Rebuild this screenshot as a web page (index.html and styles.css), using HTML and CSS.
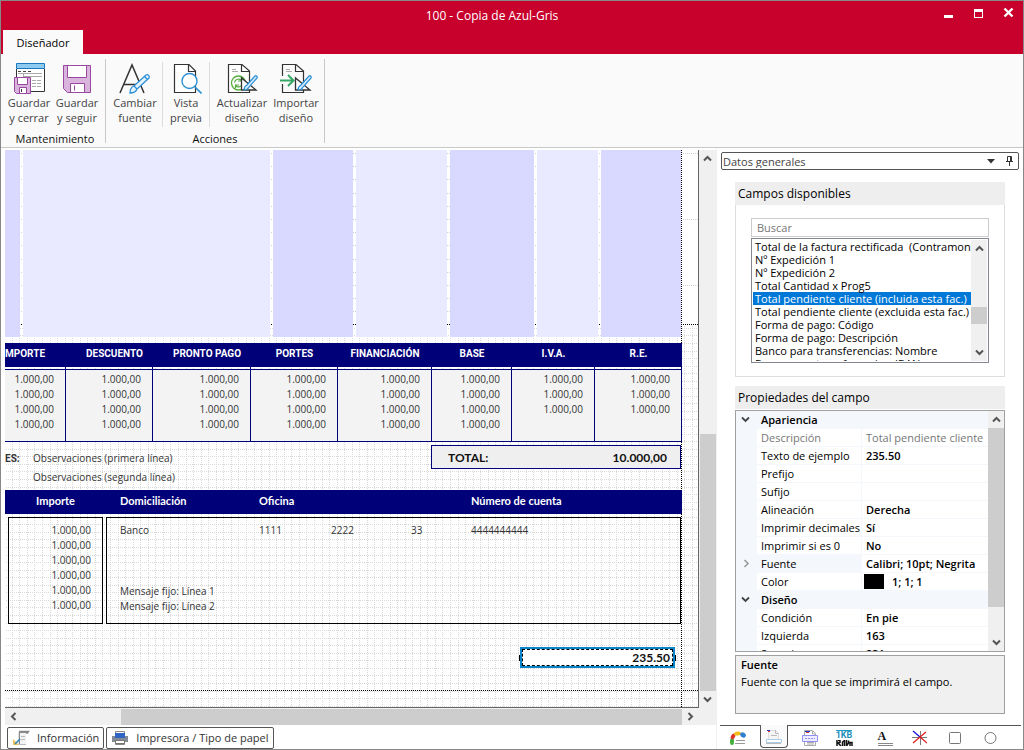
FILE: index.html
```html
<!DOCTYPE html>
<html lang="es">
<head>
<meta charset="utf-8">
<title>100 - Copia de Azul-Gris</title>
<link rel="stylesheet" href="styles.css">
</head>
<body>
<div class="window">
  <header class="titlebar">
    <h1 class="title">100 - Copia de Azul-Gris</h1>
    <div class="window-buttons">
      <button type="button" aria-label="Minimizar"><svg width="12" height="12" viewBox="0 0 12 12"><path d="M1 9h9v3H1z" fill="#fff"/></svg></button>
      <button type="button" aria-label="Maximizar"><svg width="12" height="12" viewBox="0 0 12 12" shape-rendering="crispEdges"><path fill-rule="evenodd" d="M1 3h9v9H1zM2 6v5h7V6z" fill="#fff"/></svg></button>
      <button type="button" aria-label="Cerrar"><svg width="12" height="12" viewBox="0 0 12 12"><path d="M1.500 2.500L9.500 10.500M9.500 2.500L1.500 10.500" stroke="#fff" stroke-width="2.400"/></svg></button>
    </div>
    <button type="button" class="ribbon-tab">Diseñador</button>
  </header>

  <nav class="ribbon" aria-label="Diseñador">
    <section class="group">
      <div class="tools">
        <button type="button" class="tool">
          <svg width="32" height="32" viewBox="0 0 32 32" fill="none"><path d="M3.500 7v22.500h28V7" fill="#fff" stroke="#333"/><path d="M3.500 1.500h28v5h-28z" fill="#8fcaf0" stroke="#1979c0"/><path d="M5 9.500h3m2 0h3m2 0h3" stroke="#444"/><path d="M5 11.500h24M10.500 11v4M10 14.500h19" stroke="#aaa"/><path d="M19 18.500h10M19 21.500h10M19 24.500h10" stroke="#aaa" stroke-dasharray="4 1"/><path d="M1.500 15.500h16v16h-14l-2-2z" fill="#d9b4dc" stroke="#9a479f"/><path d="M4.500 15.500h10v7h-10zM6.500 25.500h7v6h-7z" fill="#fff" stroke="#9a479f"/><path d="M8.500 27v3" stroke="#333"/></svg>
          <span>Guardar<br>y cerrar</span>
        </button>
        <button type="button" class="tool">
          <svg width="32" height="32" viewBox="0 0 32 32"><path d="M2.500 3.500h27v27H6.500l-4-4z" fill="#d9b4dc" stroke="#9a479f"/><path d="M6.500 3.500h19v12h-19zM9.500 21.500h14v9h-14z" fill="#fff" stroke="#9a479f"/><path d="M13.500 23.500v5" stroke="#9a479f"/></svg>
          <span>Guardar<br>y seguir</span>
        </button>
      </div>
      <h2>Mantenimiento</h2>
    </section>
    <section class="group">
      <div class="tools">
        <button type="button" class="tool">
          <svg width="32" height="32" viewBox="0 0 32 32" fill="none"><path d="M1 31L13 3l12 28M5 22.500h15" stroke="#333" stroke-width="1.500"/><path d="M11 31c0-4 1-6 4-7l12-11c2-1 4 1 3 3L18 27c-1 3-3 4-7 4zM15 24l3 3M25 14l3 3" fill="#e4f2fc" stroke="#2b8fd6" stroke-width="1.300"/></svg>
          <span>Cambiar<br>fuente</span>
        </button>
        <button type="button" class="tool tool-divided">
          <svg width="32" height="32" viewBox="0 0 32 32" fill="none"><path d="M19 2.500H4.500v28h21V9zM18.500 3v6.500H25" fill="#fff" stroke="#333" stroke-width="1.200"/><circle cx="19.500" cy="19" r="7.500" fill="#fff" stroke="#2b8fd6" stroke-width="1.400"/><path d="M25 25l6.500 6.500" stroke="#2b8fd6" stroke-width="1.600"/></svg>
          <span>Vista<br>previa</span>
        </button>
        <button type="button" class="tool">
          <svg width="32" height="32" viewBox="0 0 32 32" fill="none"><path d="M16 2.500H2.500v28h21V9zM15.500 3v6.500H23" fill="#fff" stroke="#333" stroke-width="1.200"/><path d="M6 7.500h4M6 9.500h6" stroke="#aaa"/><circle cx="12.500" cy="21" r="7" fill="#fff" stroke="#55ad3c" stroke-width="1.300"/><path d="M8.500 20.500a4 4 0 0 1 7-2m0-3v3.500H12M16.500 21.500a4 4 0 0 1-7 2m0 3v-3.500H13" stroke="#55ad3c" stroke-width="1.200"/><path d="M15.500 16v12H30z" fill="#fff" stroke="#333" stroke-width="1.300"/><path d="M18 28c0-3 1-4 3-5l8-9c1-1 3 1 2 2l-8 9c-1 2-2 3-5 3z" fill="#d4ebfb" stroke="#2b8fd6" stroke-width="1.200"/></svg>
          <span>Actualizar<br>diseño</span>
        </button>
        <button type="button" class="tool">
          <svg width="32" height="32" viewBox="0 0 32 32" fill="none"><path d="M2.500 14V2.500H16L23.500 9v21.500h-21V22M15.500 3v6.500H23" stroke="#333" stroke-width="1.200"/><path d="M6 7.500h4M6 9.500h6" stroke="#aaa"/><path d="M0 18.500h12M8 13l5.500 5.500L8 24" stroke="#35a866" stroke-width="2"/><path d="M15.500 16v12H30z" fill="#fff" stroke="#333" stroke-width="1.300"/><path d="M18 28c0-3 1-4 3-5l8-9c1-1 3 1 2 2l-8 9c-1 2-2 3-5 3z" fill="#d4ebfb" stroke="#2b8fd6" stroke-width="1.200"/></svg>
          <span>Importar<br>diseño</span>
        </button>
      </div>
      <h2>Acciones</h2>
    </section>
  </nav>

  <main class="workspace">
    <div class="designer">
      <div class="canvas">
        <svg class="canvas-grid" width="100%" height="100%" shape-rendering="crispEdges">
          <defs>
            <pattern id="fine" x="7" y="170" width="68" height="68" patternUnits="userSpaceOnUse">
              <path d="M0 .500h68M0 8.500h68M0 15.500h68M0 23.500h68M0 31.500h68M0 38.500h68M0 46.500h68M0 53.500h68M0 61.500h68M.500 0v68M7.500 0v68M15.500 0v68M22.500 0v68M30.500 0v68M38.500 0v68M45.500 0v68M53.500 0v68M60.500 0v68" stroke="#d9d9d9" stroke-dasharray="1 1"/>
            </pattern>
            <pattern id="rows" y="3" width="4" height="66" patternUnits="userSpaceOnUse">
              <path d="M0 .500h4M0 13.500h4M0 26.500h4M0 40.500h4M0 53.500h4" stroke="#d0d0d0" stroke-dasharray="1 1"/>
            </pattern>
            <pattern id="wide" y="3" width="4" height="66" patternUnits="userSpaceOnUse">
              <path d="M0 .500h4" stroke="#d0d0d0" stroke-dasharray="1 1"/>
            </pattern>
          </defs>
          <rect width="676" height="174" fill="url(#rows)"/>
          <rect x="677" width="100%" height="174" fill="url(#wide)"/>
          <rect y="175" width="100%" height="100%" fill="url(#fine)"/>
          <path d="M0 174.500h4000M0 540.500h4000M676.500 0v4000" stroke="#000" stroke-dasharray="1 1"/>
        </svg>
        <div class="report">
          <div class="bands"><i></i><i></i><i></i><i></i><i></i><i></i><i></i></div>
          <table class="amounts">
            <colgroup><col class="w61"><col class="w87"><col class="w98"><col class="w87"><col class="w94"><col class="w80"><col class="w83"><col class="w87"></colgroup>
            <thead><tr><th>MPORTE</th><th>DESCUENTO</th><th>PRONTO PAGO</th><th>PORTES</th><th>FINANCIACIÓN</th><th>BASE</th><th>I.V.A.</th><th>R.E.</th></tr></thead>
            <tbody>
              <tr><td>1.000,00</td><td>1.000,00</td><td>1.000,00</td><td>1.000,00</td><td>1.000,00</td><td>1.000,00</td><td>1.000,00</td><td>1.000,00</td></tr>
              <tr><td>1.000,00</td><td>1.000,00</td><td>1.000,00</td><td>1.000,00</td><td>1.000,00</td><td>1.000,00</td><td>1.000,00</td><td>1.000,00</td></tr>
              <tr><td>1.000,00</td><td>1.000,00</td><td>1.000,00</td><td>1.000,00</td><td>1.000,00</td><td>1.000,00</td><td>1.000,00</td><td>1.000,00</td></tr>
              <tr><td>1.000,00</td><td>1.000,00</td><td>1.000,00</td><td>1.000,00</td><td>1.000,00</td><td>1.000,00</td><td></td><td></td></tr>
            </tbody>
          </table>
          <div class="summary">
            <dl class="notes"><dt>ES:</dt><dd>Observaciones (primera línea)</dd><dd>Observaciones (segunda línea)</dd></dl>
            <div class="total"><span>TOTAL:</span><span>10.000,00</span></div>
          </div>
          <div class="bank-head"><span>Importe</span><span>Domiciliación</span><span>Oficina</span><span>Número de cuenta</span></div>
          <div class="bank-body">
            <div class="due"><span>1.000,00</span><span>1.000,00</span><span>1.000,00</span><span>1.000,00</span><span>1.000,00</span><span>1.000,00</span></div>
            <div class="account">
              <span>Banco</span><span>1111</span><span>2222</span><span>33</span><span>4444444444</span>
              <p>Mensaje fijo: Línea 1<br>Mensaje fijo: Línea 2</p>
            </div>
          </div>
          <div class="selected-field"><span>235.50</span></div>
        </div>
      </div>
      <div class="vscroll">
        <button type="button" aria-label="Subir"><svg width="9" height="7" viewBox="0 0 9 7"><path d="M1 5.500L4.500 2 8 5.500" fill="none" stroke="#555" stroke-width="2"/></svg></button>
        <div class="track"><div class="thumb"></div></div>
        <button type="button" aria-label="Bajar"><svg width="9" height="7" viewBox="0 0 9 7"><path d="M1 1.500L4.500 5 8 1.500" fill="none" stroke="#555" stroke-width="2"/></svg></button>
      </div>
      <div class="hscroll">
        <button type="button" aria-label="Izquierda"><svg width="7" height="9" viewBox="0 0 7 9"><path d="M5.500 1L2 4.500 5.500 8" fill="none" stroke="#555" stroke-width="2"/></svg></button>
        <div class="track"><div class="thumb"></div></div>
        <button type="button" aria-label="Derecha"><svg width="7" height="9" viewBox="0 0 7 9"><path d="M1.500 1L5 4.500 1.500 8" fill="none" stroke="#555" stroke-width="2"/></svg></button>
      </div>
      <div class="corner"></div>
      <div class="page-tabs">
        <button type="button"><svg width="18" height="18" viewBox="0 0 18 18"><path d="M7 2.500h9.500l-1 1.500H7.500V16" fill="none" stroke="#888" stroke-width="1.500"/><path d="M8 4h6v12H8z" fill="#f3f3f3"/><path d="M9 7.500h4M9 10.500h4M7 15.500h7" stroke="#bbb"/><path d="M1 10v6h6z" fill="#f0c35a"/><path d="M3 15l5-5" stroke="#3188b8" stroke-width="1.600"/></svg>Información</button>
        <button type="button"><svg width="18" height="18" viewBox="0 0 18 18"><path d="M4.500 5V2.500h9V5M4.500 13v2.500h9V13" fill="#fff" stroke="#888"/><path d="M1 7h16v6H1z" fill="#858b94"/><path d="M4 4h10v5H4z" fill="#2f66c4"/><path d="M4.500 11.500h9v3h-9z" fill="#fff" stroke="#777"/></svg>Impresora / Tipo de papel</button>
      </div>
    </div>

    <aside class="panel">
      <div class="section-picker">
        <select aria-label="Sección"><option>Datos generales</option></select>
        <svg width="8" height="5" viewBox="0 0 8 5"><path d="M0 0h8L4 4.500z" fill="#333"/></svg>
        <button type="button" aria-label="Fijar panel"><svg width="9" height="10" viewBox="0 0 9 10"><path d="M1 5.500h7M2.500 5.500V.500h4v5M4.500 6v4M5.500 1v5" fill="none" stroke="#333"/></svg></button>
      </div>

      <section class="fields">
        <h2>Campos disponibles</h2>
        <div class="fields-body">
          <input type="search" placeholder="Buscar" aria-label="Buscar">
          <div class="listbox">
            <ul role="listbox" aria-label="Campos disponibles">
              <li role="option">Total de la factura rectificada&nbsp; (Contramon</li>
              <li role="option">Nº Expedición 1</li>
              <li role="option">Nº Expedición 2</li>
              <li role="option">Total Cantidad x Prog5</li>
              <li role="option" aria-selected="true" class="selected">Total pendiente cliente (incluida esta fac.)</li>
              <li role="option">Total pendiente cliente (excluida esta fac.)</li>
              <li role="option">Forma de pago: Código</li>
              <li role="option">Forma de pago: Descripción</li>
              <li role="option">Banco para transferencias: Nombre</li>
              <li role="option">Banco para transferencias: IBAN</li>
            </ul>
            <div class="vscroll">
              <button type="button" aria-label="Subir lista"><svg width="9" height="7" viewBox="0 0 9 7"><path d="M1 5.500L4.500 2 8 5.500" fill="none" stroke="#555" stroke-width="2"/></svg></button>
              <div class="track"><div class="thumb"></div></div>
              <button type="button" aria-label="Bajar lista"><svg width="9" height="7" viewBox="0 0 9 7"><path d="M1 1.500L4.500 5 8 1.500" fill="none" stroke="#555" stroke-width="2"/></svg></button>
            </div>
          </div>
        </div>
      </section>

      <section class="properties">
        <h2>Propiedades del campo</h2>
        <div class="property-box">
          <div class="property-view">
            <table class="property-grid">
              <colgroup><col class="gutter"><col class="name"><col></colgroup>
              <tbody>
                <tr class="category"><td><svg width="9" height="7" viewBox="0 0 9 7"><path d="M1 1.500L4.500 5 8 1.500" fill="none" stroke="#444" stroke-width="1.800"/></svg></td><th colspan="2">Apariencia</th></tr>
                <tr class="readonly"><td></td><th>Descripción</th><td>Total pendiente cliente</td></tr>
                <tr><td></td><th>Texto de ejemplo</th><td>235.50</td></tr>
                <tr><td></td><th>Prefijo</th><td></td></tr>
                <tr><td></td><th>Sufijo</th><td></td></tr>
                <tr><td></td><th>Alineación</th><td>Derecha</td></tr>
                <tr><td></td><th>Imprimir decimales</th><td>Sí</td></tr>
                <tr><td></td><th>Imprimir si es 0</th><td>No</td></tr>
                <tr class="current"><td><svg width="7" height="9" viewBox="0 0 7 9"><path d="M1.500 1L5 4.500 1.500 8" fill="none" stroke="#999" stroke-width="1.600"/></svg></td><th>Fuente</th><td>Calibri; 10pt; Negrita</td></tr>
                <tr><td></td><th>Color</th><td class="color"><i></i>1; 1; 1</td></tr>
                <tr class="category"><td><svg width="9" height="7" viewBox="0 0 9 7"><path d="M1 1.500L4.500 5 8 1.500" fill="none" stroke="#444" stroke-width="1.800"/></svg></td><th colspan="2">Diseño</th></tr>
                <tr><td></td><th>Condición</th><td>En pie</td></tr>
                <tr><td></td><th>Izquierda</th><td>163</td></tr>
                <tr><td></td><th>Superior</th><td>231</td></tr>
              </tbody>
            </table>
          </div>
          <div class="vscroll">
            <button type="button" aria-label="Subir propiedades"><svg width="9" height="7" viewBox="0 0 9 7"><path d="M1 5.500L4.500 2 8 5.500" fill="none" stroke="#555" stroke-width="2"/></svg></button>
            <div class="track"><div class="thumb"></div></div>
            <button type="button" aria-label="Bajar propiedades"><svg width="9" height="7" viewBox="0 0 9 7"><path d="M1 1.500L4.500 5 8 1.500" fill="none" stroke="#555" stroke-width="2"/></svg></button>
          </div>
        </div>
        <div class="help"><strong>Fuente</strong><p>Fuente con la que se imprimirá el campo.</p></div>
      </section>

      <div class="element-tabs">
        <button type="button" aria-label="Datos"><svg width="18" height="18" viewBox="0 0 18 18"><ellipse cx="3" cy="12.500" rx="2" ry="3.500" fill="#3fae3a"/><ellipse cx="4" cy="7.500" rx="2" ry="3" transform="rotate(30 4 7.500)" fill="#d9352b"/><ellipse cx="8.500" cy="4.500" rx="3.500" ry="2" transform="rotate(-10 8.500 4.500)" fill="#f2bd16"/><ellipse cx="14" cy="6" rx="3" ry="2.300" transform="rotate(35 14 6)" fill="#2f7fd0"/><path d="M7 11.500h9M6 14.500h10" stroke="#999"/></svg></button>
        <button type="button" aria-label="Campo" class="active"><svg width="18" height="18" viewBox="0 0 18 18" fill="none"><path d="M3.500 12V3.500h7l3 3V12" fill="#f5f5f5" stroke="#ddd"/><path d="M2 3.500h3" stroke="#2137d0"/><path d="M3 4.500h2" stroke="#e33"/><path d="M10.500 3v3.500h3M6 8.500h6" stroke="#bbb"/><path d="M1.500 12.500h15v3h-15z" fill="#fff" stroke="#a8cbe8"/><path d="M1 16.500h15" stroke="#bbb"/></svg></button>
        <button type="button" aria-label="Sección"><svg width="18" height="18" viewBox="0 0 18 18" fill="none"><path d="M3.500 1.500h8l3 3v12h-11z" fill="#fff" stroke="#aaa"/><path d="M4 2.500h5" stroke="#2137d0"/><path d="M5 3.500h3" stroke="#e33"/><path d="M6 13.500h7M6 15h7M11.500 2v3h3" stroke="#aaa"/><path d="M1.500 6.500h15v6h-15z" fill="#eeedff" stroke="#8f8ff2"/><path d="M4 9.500h10" stroke="#8f8ff2" stroke-dasharray="2 1"/></svg></button>
        <button type="button" class="code-tool"><b>1KB</b><svg width="17" height="6" viewBox="0 0 17 6" fill="none"><path d="M1 0v6M2 .500h2v2L2 3l3 3M6.500 6V2l2-1.500V6M10.500 0v6l2-3V.500M14 6V2.500h2V6" stroke="#111" stroke-width="1.500"/></svg></button>
        <button type="button" aria-label="Texto" class="text-tool"><b>A</b></button>
        <button type="button" aria-label="Línea"><svg width="18" height="18" viewBox="0 0 18 18" fill="none"><path d="M3 8.500h15M11.500 2v14" stroke="#777"/><path d="M4 2l7 6" stroke="#1212dc" stroke-width="1.300"/><path d="M17 3L11 8 4 14M11 8l7 6" stroke="#e11a1a" stroke-width="1.200"/></svg></button>
        <button type="button" aria-label="Rectángulo"><svg width="18" height="18" viewBox="0 0 18 18"><rect x="4.500" y="3.500" width="11" height="11" rx="1" fill="none" stroke="#777"/></svg></button>
        <button type="button" aria-label="Elipse"><svg width="18" height="18" viewBox="0 0 18 18"><circle cx="9.500" cy="9" r="5.500" fill="none" stroke="#777"/></svg></button>
      </div>
    </aside>
  </main>
</div>
</body>
</html>
```
FILE: styles.css
```css
* { box-sizing: border-box; }

body {
  margin: 0;
  background: #fff;
  color: #111;
  font: 11px/15px "Open Sans", "Noto Sans", sans-serif;
}

h1, h2, p, ul, dl, dd { margin: 0; padding: 0; font: inherit; }

button, input, select {
  margin: 0;
  padding: 0;
  border: 0;
  background: none;
  color: inherit;
  font: inherit;
}

svg { display: block; flex: none; }

.window {
  display: flex;
  flex-direction: column;
  height: 100vh;
  border: 1px solid #888;
}

/* Title bar */
.titlebar {
  display: grid;
  grid-template-columns: 1fr auto 1fr;
  grid-template-rows: 29px 24px;
  background: #c8002c;
  color: #fff;
}
.title { grid-column: 2; align-self: center; padding-right: 40px; font-size: 12px; }
.window-buttons {
  display: flex;
  justify-content: flex-end;
  gap: 18px;
  padding: 5px 8px 0 0;
}
.window-buttons button { height: 12px; }
.ribbon-tab {
  grid-column: 1;
  grid-row: 2;
  justify-self: start;
  width: 80px;
  margin-left: 2px;
  background: #fafafa;
  color: #000;
}

/* Ribbon */
.ribbon {
  display: flex;
  height: 94px;
  padding: 5px 4px 4px;
  border-bottom: 1px solid #c8c8c8;
  background: #fafafa;
}
.group {
  display: flex;
  flex-direction: column;
  border-right: 1px solid #c8c8c8;
  text-align: center;
}
.group:first-child { width: 101px; }
.group:last-child { width: 219px; }
.group h2 { margin-top: 4px; }
.tools { display: flex; padding-top: 3px; }
.group:last-child .tools { padding-left: 2px; }
.tool {
  display: flex;
  flex-direction: column;
  align-items: center;
  gap: 1px;
  width: 48px;
  height: 65px;
  color: #444;
}
.group:last-child .tool { width: 54px; }
.group:last-child .tool-divided {
  width: 48px;
  margin-right: 5px;
  border: solid #ddd;
  border-width: 0 1px;
}

/* Work area */
.workspace {
  display: grid;
  grid-template-columns: 1fr 307px;
  flex: 1;
  min-height: 0;
}
.designer {
  display: grid;
  grid-template-columns: 1fr 17px;
  grid-template-rows: 1fr 17px 24px;
  min-width: 0;
  min-height: 0;
  padding: 2px 0 0 4px;
}
.canvas {
  position: relative;
  overflow: hidden;
  border: solid #666;
  border-width: 0 1px 1px 0;
  color: #333;
  font-size: 10px;
}
.canvas-grid { position: absolute; inset: 0; }
.report { position: relative; width: 677px; }

.bands {
  display: grid;
  grid-template-columns: 15px 247px 80px 91px 84px 61px 80px;
  column-gap: 3px;
  height: 187px;
}
.bands i { background: #d9d9ff; }
.bands i:nth-child(even) { background: #e9e9ff; }

.amounts {
  width: 677px;
  margin-top: 6px;
  border-spacing: 0;
  table-layout: fixed;
}
.w61 { width: 61px; }
.w80 { width: 80px; }
.w83 { width: 83px; }
.w87 { width: 87px; }
.w94 { width: 94px; }
.w98 { width: 98px; }
.amounts th {
  height: 24px;
  padding: 0 0 3px;
  background: #000078;
  color: #fff;
  font-family: Roboto, sans-serif;
  white-space: nowrap;
}
.amounts th:nth-child(1) { text-align: left; }
.amounts th:nth-child(2), .amounts th:nth-child(3) { padding-left: 10px; }
.amounts td {
  height: 15px;
  padding: 0 11px 0 0;
  border-right: 1px solid #000078;
  background: #f3f3f3;
  text-align: right;
}
.amounts tbody tr:first-child td {
  height: 20px;
  padding-top: 5px;
  background: linear-gradient(transparent 2px, #000078 2px 3px, #f3f3f3 3px);
}
.amounts tbody tr:last-child td {
  height: 25px;
  padding-bottom: 9px;
  border-bottom: 1px solid #000078;
}

.summary { display: flex; justify-content: space-between; height: 48px; }
.notes {
  display: grid;
  grid-template-columns: 28px auto;
  grid-auto-rows: 19px;
  align-items: center;
  padding-top: 7px;
}
.notes dt { font: 700 10px/15px Roboto, sans-serif; }
.notes dd { grid-column: 2; }
.total {
  display: flex;
  align-items: center;
  justify-content: space-between;
  width: 250px;
  height: 24px;
  margin-top: 3px;
  margin-right: 1px;
  padding: 0 13px 0 16px;
  border: 1px solid #000078;
  background: #efefef;
  color: #111;
  font: 700 12px/15px Lato, sans-serif;
}

.bank-head {
  display: grid;
  grid-template-columns: 84px 139px 212px auto;
  height: 24px;
  padding: 3px 0 0 31px;
  background: #000078;
  color: #fff;
  font: 700 11px/15px Lato, sans-serif;
}
.bank-body {
  display: grid;
  grid-template-columns: 95px 575px;
  gap: 3px;
  padding: 3px 0 0 3px;
}
.due, .account { height: 107px; border: 1px solid #000; }
.due {
  display: flex;
  flex-direction: column;
  padding: 5px 11px 0 0;
  text-align: right;
}
.account {
  display: grid;
  grid-template-columns: 139px 72px 80px 60px auto;
  align-content: start;
  row-gap: 46px;
  padding: 5px 0 0 13px;
}
.account p { grid-column: 1 / -1; }

.selected-field {
  position: absolute;
  top: 497px;
  left: 515px;
  width: 155px;
  height: 21px;
  border: 2px solid #0a84c8;
  background: #fff;
  color: #111;
  font: 700 12px/15px Lato, sans-serif;
  text-align: right;
}
.selected-field span {
  display: block;
  height: 17px;
  padding-right: 2px;
  border: 1px dashed #000;
}
.selected-field::before, .selected-field::after {
  content: "";
  position: absolute;
  top: 6px;
  width: 1px;
  height: 6px;
  background: #000;
}
.selected-field::before { left: -3px; }
.selected-field::after { right: -3px; }

/* Scroll bars */
.vscroll, .hscroll { display: flex; background: #f0f0f0; }
.vscroll { flex-direction: column; }
.vscroll button, .hscroll button {
  display: flex;
  align-items: center;
  justify-content: center;
  flex: 0 0 17px;
}
.track { display: flex; flex: 1; min-width: 0; min-height: 0; }
.vscroll .track { flex-direction: column; }
.thumb { background: #cdcdcd; }
.designer > .vscroll .track { padding-left: 1px; justify-content: flex-end; }
.designer > .vscroll .thumb { height: 49%; }
.hscroll .track { padding-top: 1px; justify-content: flex-end; }
.hscroll .thumb { width: 85%; }
.corner { background: #f0f0f0; }

.page-tabs { display: flex; gap: 2px; padding: 2px 0 0 2px; }
.page-tabs button {
  display: flex;
  align-items: center;
  gap: 7px;
  height: 22px;
  padding: 0 4px;
  border: 1px solid #555;
  border-radius: 2px;
  color: #333;
  line-height: 14px;
}

/* Side panel */
.panel {
  display: flex;
  flex-direction: column;
  min-height: 0;
  padding: 4px 2px 0 3px;
  border-left: 1px solid #f0f0f0;
}
.section-picker {
  display: flex;
  align-items: center;
  height: 18px;
  margin: 0 2px 0 1px;
  border: 1px solid #555;
  border-radius: 2px;
  color: #444;
}
.section-picker select { flex: 1; height: 14px; appearance: none; padding-left: 1px; }
.section-picker button { padding: 0 4px 0 10px; }

.fields, .properties { margin-right: 16px; margin-left: 15px; }
.fields { margin-top: 12px; }
.fields h2, .properties h2 {
  height: 23px;
  padding: 4px 3px;
  background: #eee;
  color: #000;
  font-size: 12px;
}
.properties h2 { padding-top: 4px; }
.fields-body {
  padding: 13px 15px;
  border: 1px solid #ddd;
  border-top: 0;
}
.fields-body input {
  display: block;
  width: 100%;
  height: 19px;
  padding: 0 5px 1px;
  border: 1px solid #ccc;
}
.fields-body input::placeholder { color: #777; }
.listbox {
  display: flex;
  height: 125px;
  margin-top: 1px;
  padding: 1px;
  border: 1px solid #828790;
  color: #000;
}
.listbox ul {
  flex: 1;
  overflow: hidden;
  list-style: none;
  line-height: 13px;
  white-space: nowrap;
}
.listbox li { padding-left: 2px; }
.listbox .selected { background: #0078d7; color: #fff; }
.listbox .vscroll { flex: 0 0 16px; }
.listbox .thumb { height: 17px; margin-top: 50px; }

.properties {
  display: flex;
  flex: 1;
  flex-direction: column;
  min-height: 0;
  margin-top: 9px;
}
.property-box {
  display: flex;
  flex: 1;
  min-height: 0;
  margin-top: 1px;
  border: 1px solid #a0a0a0;
}
.property-view { flex: 1; min-width: 0; overflow: hidden; }
.property-grid {
  width: 100%;
  border-spacing: 0;
  color: #000;
  table-layout: fixed;
  white-space: nowrap;
}
.gutter { width: 21px; }
.name { width: 105px; }
.property-grid td, .property-grid th {
  height: 18px;
  padding: 0 0 0 4px;
  border-bottom: 1px solid #f4f7fc;
}
.property-grid th {
  border-right: 1px solid #f4f7fc;
  font-weight: 400;
  text-align: left;
}
.property-grid td { font-weight: 600; }
.property-grid td:first-child { padding-left: 5px; background: #f4f7fc; }
.property-grid .category th { background: #f4f7fc; font-weight: 600; }
.property-grid .current th { background: #f4f7fc; }
.property-grid .readonly th, .property-grid .readonly td { color: #777; font-weight: 400; }
.property-grid .current svg { margin-left: 2px; }
.property-grid .color { padding-left: 2px; }
.color i {
  display: inline-block;
  width: 20px;
  height: 15px;
  margin-right: 8px;
  background: #000;
  vertical-align: top;
}
.property-box .vscroll { flex: 0 0 16px; }
.property-box .thumb { height: 87%; }

.help {
  height: 59px;
  margin-top: 3px;
  padding: 1px 5px;
  border: 1px solid #a0a0a0;
  background: #f0f0f0;
  color: #000;
}
.help strong { font-weight: 600; }
.help p { margin-top: 2px; }

.element-tabs {
  display: flex;
  height: 24px;
  margin-top: 11px;
  border-top: 1px solid #555;
}
.element-tabs button {
  display: flex;
  align-items: center;
  justify-content: center;
  flex: 0 1 36px;
}
.element-tabs .active {
  flex-basis: 28px;
  height: 23px;
  margin: -1px 4px 0;
  border: 1px solid #555;
  border-top: 0;
  border-radius: 0 0 4px 4px;
  background: #fafafd;
}
.element-tabs .code-tool { flex-direction: column; padding-right: 4px; }
.code-tool b {
  border-top: 1px solid #1e9ac8;
  color: #1e8fbd;
  font: 700 9px/9px Roboto, sans-serif;
}
.text-tool b {
  width: 15px;
  margin-left: 6px;
  border-bottom: 3px double #888;
  font: 700 12px/13px "Liberation Serif", serif;
  text-align: left;
}
```
